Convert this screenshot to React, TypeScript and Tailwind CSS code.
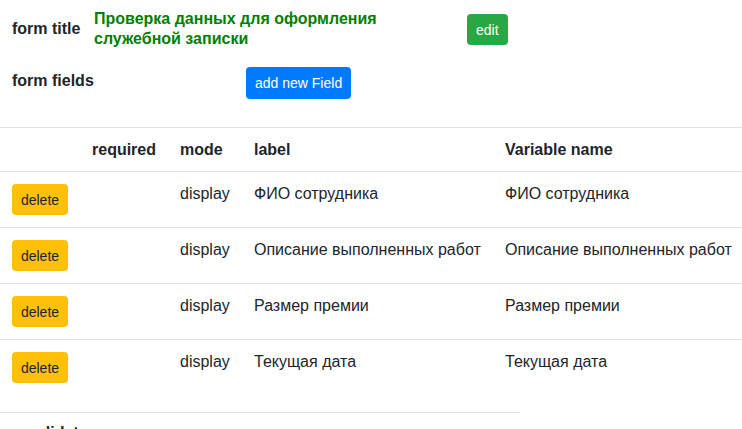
export default function App() {
  const rows = ['ФИО сотрудника', 'Описание выполненных работ', 'Размер премии', 'Текущая дата'];
  return (
    <div className="w-[742px] h-[429px] overflow-hidden bg-white text-[#212529] text-base leading-6" style={{ fontFamily: '"Liberation Sans", Arial, sans-serif' }}>
      <div className="flex items-start pt-[8px]">
        <div className="w-[94px] pl-3 pt-[9px] font-bold">form title</div>
        <div className="w-[373px] pt-[1px] font-bold text-[#008000] leading-5">Проверка данных для оформления служебной записки</div>
        <button className="mt-[6px] h-[31px] px-[9px] rounded bg-[#28a745] text-white text-sm">edit</button>
      </div>
      <div className="flex items-start mt-[18px]">
        <div className="w-[246px] pl-3 pt-[2px] font-bold">form fields</div>
        <button className="h-[32px] px-[9px] rounded bg-[#007bff] text-white text-sm">add new Field</button>
      </div>
      <table className="mt-[28px] border-collapse w-[760px] table-fixed">
        <colgroup>
          <col className="w-[80px]" />
          <col className="w-[88px]" />
          <col className="w-[74px]" />
          <col className="w-[251px]" />
          <col className="w-[267px]" />
        </colgroup>
        <thead>
          <tr className="border-t border-b border-[#dee2e6] h-[44px] font-bold text-left">
            <th></th>
            <th className="px-3">required</th>
            <th className="px-3">mode</th>
            <th className="px-3">label</th>
            <th className="px-3">Variable name</th>
          </tr>
        </thead>
        <tbody>
          {rows.map((r, i) => (
            <tr key={r} className={`${i < 3 ? 'h-[56px] border-b border-[#dee2e6]' : 'h-[72px]'} align-top`}>
              <td className="pl-3 pt-3">
                <button className="h-[31px] w-[56px] rounded bg-[#ffc107] text-[#212529] text-sm">delete</button>
              </td>
              <td></td>
              <td className="px-3 pt-[10px]">display</td>
              <td className="px-3 pt-[10px] whitespace-nowrap">{r}</td>
              <td className="px-3 pt-[10px] whitespace-nowrap">{r}</td>
            </tr>
          ))}
        </tbody>
      </table>
      <div className="w-[520px] border-t border-[#dee2e6] pl-[28px] pt-[8px] font-bold">validators</div>
    </div>
  );
}
